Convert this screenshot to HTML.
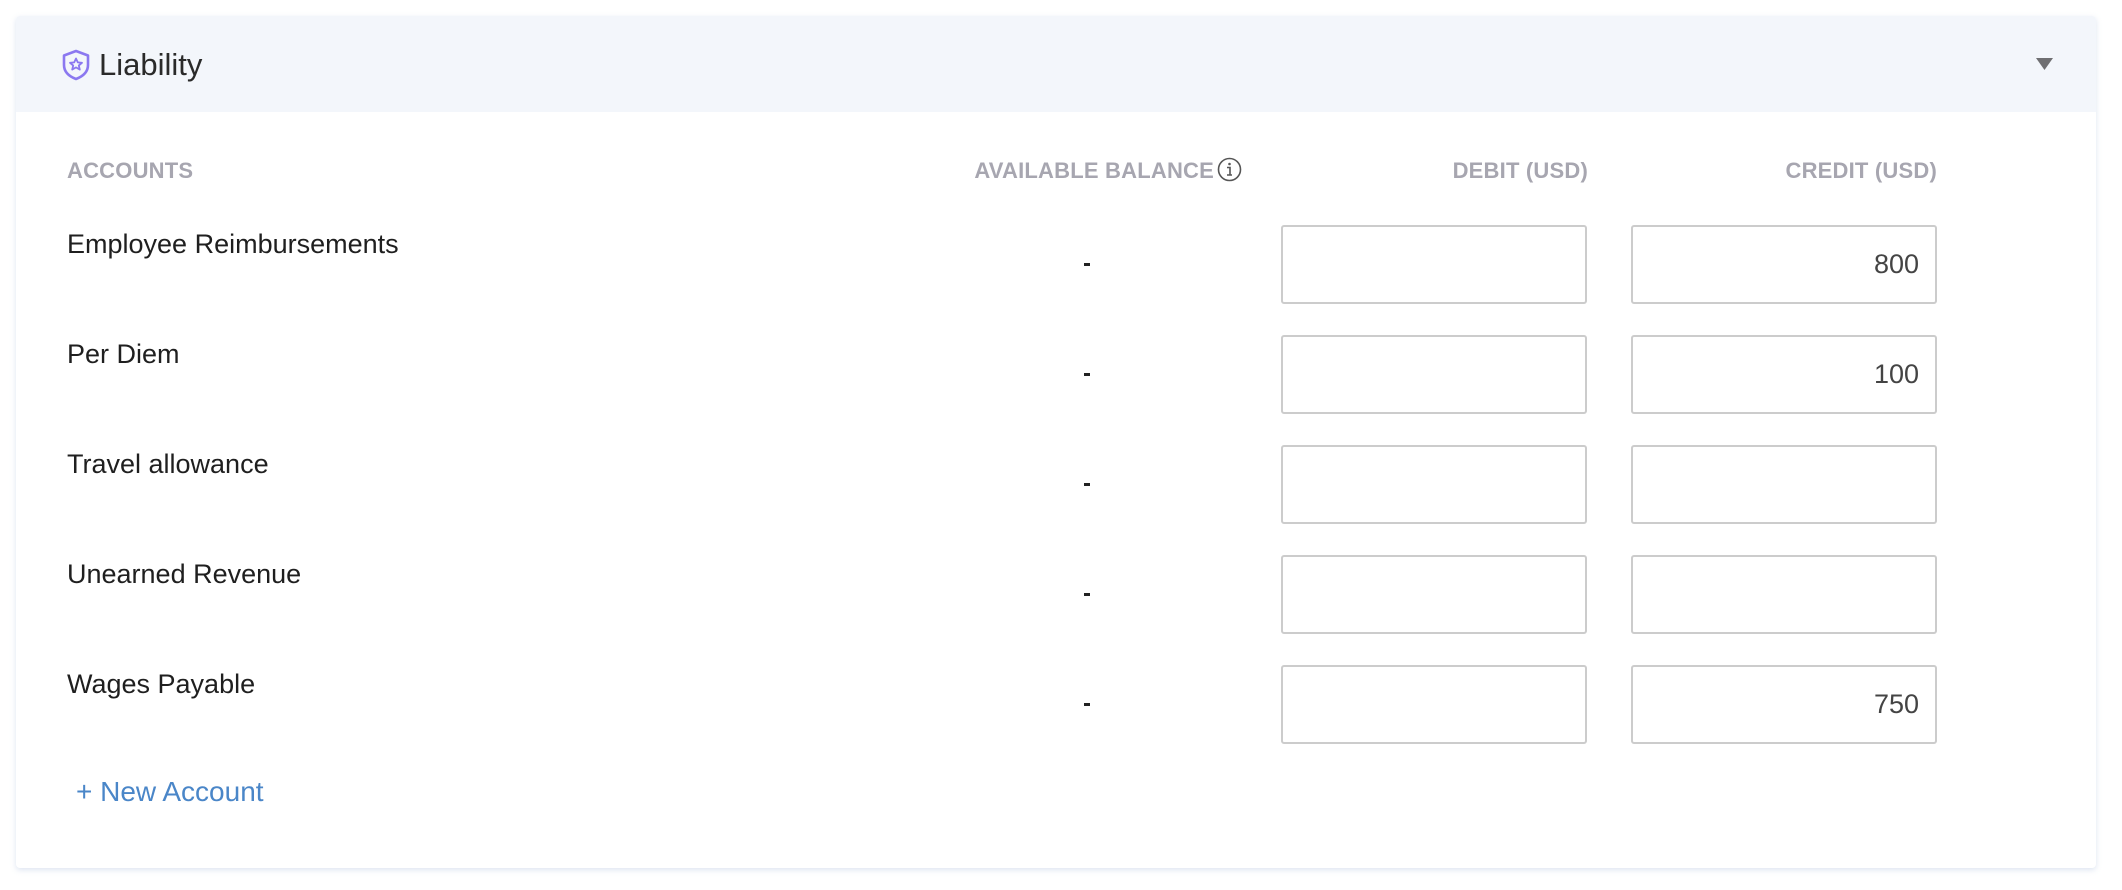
<!DOCTYPE html>
<html><head><meta charset="utf-8"><style>
body{margin:0;width:2122px;height:890px;background:#fff;font-family:"Liberation Sans",sans-serif;position:relative;overflow:hidden}
.card{position:absolute;left:16px;top:16px;width:2080px;height:852px;background:#fff;border-radius:4px;box-shadow:0 2px 6px rgba(180,195,225,.45)}
.hdr{position:absolute;left:0;top:0;right:0;height:96px;background:#f3f6fb;border-radius:4px 4px 0 0}
.abs{position:absolute;white-space:nowrap}
.th{font-size:22px;font-weight:bold;color:#a7a6b0;top:141px;line-height:28px;letter-spacing:0.2px}
.name{font-size:27px;color:#1f1f1f;left:51px;line-height:30px}
.dash{width:6px;height:3px;background:#222;left:1068px}
.inp{border:2px solid #cccccc;border-radius:3px;height:79px;width:306px;box-sizing:border-box;font-size:27px;color:#444;text-align:right;padding-right:16px;line-height:75px}
</style></head><body>
<div class="card">
 <div class="hdr"></div>
 <svg class="abs" style="left:45px;top:33px" width="30" height="32" viewBox="0 0 30 32"><path d="M15 2 L27 6.5 V16 C27 23 21.5 27.5 15 30 C8.5 27.5 3 23 3 16 V6.5 Z" fill="none" stroke="#8b78f0" stroke-width="2.6" stroke-linejoin="round"/><path d="M15 9.5 L16.8 13.4 L21 13.8 L17.8 16.5 L18.8 20.6 L15 18.4 L11.2 20.6 L12.2 16.5 L9 13.8 L13.2 13.4 Z" fill="none" stroke="#8b78f0" stroke-width="1.8" stroke-linejoin="round"/></svg>
 <div class="abs" style="left:83px;top:30px;font-size:31px;color:#2a2a2a;line-height:38px">Liability</div>
 <svg class="abs" style="left:2020px;top:42px" width="17" height="13"><path d="M0 0 H17 L8.5 12 Z" fill="#6f6f72"/></svg>
 <div class="abs th" style="left:51px">ACCOUNTS</div>
 <div class="abs th" style="right:882px">AVAILABLE BALANCE</div>
 <svg class="abs" style="left:1201px;top:141px" width="25" height="25" viewBox="0 0 25 25"><circle cx="12.5" cy="12.5" r="11" fill="none" stroke="#555" stroke-width="1.6"/><circle cx="12.5" cy="7" r="1.3" fill="#555"/><path d="M10 10.5 H13 V18 M10 18 H15" stroke="#555" stroke-width="1.6" fill="none"/></svg>
 <div class="abs th" style="right:508px">DEBIT (USD)</div>
 <div class="abs th" style="right:159px">CREDIT (USD)</div>

 <div class="abs name" style="top:213px">Employee Reimbursements</div>
 <div class="abs dash" style="top:247px"></div>
 <div class="abs inp" style="left:1265px;top:209px"></div>
 <div class="abs inp" style="left:1615px;top:209px">800</div>

 <div class="abs name" style="top:323px">Per Diem</div>
 <div class="abs dash" style="top:357px"></div>
 <div class="abs inp" style="left:1265px;top:319px"></div>
 <div class="abs inp" style="left:1615px;top:319px">100</div>

 <div class="abs name" style="top:433px">Travel allowance</div>
 <div class="abs dash" style="top:467px"></div>
 <div class="abs inp" style="left:1265px;top:429px"></div>
 <div class="abs inp" style="left:1615px;top:429px"></div>

 <div class="abs name" style="top:543px">Unearned Revenue</div>
 <div class="abs dash" style="top:577px"></div>
 <div class="abs inp" style="left:1265px;top:539px"></div>
 <div class="abs inp" style="left:1615px;top:539px"></div>

 <div class="abs name" style="top:653px">Wages Payable</div>
 <div class="abs dash" style="top:687px"></div>
 <div class="abs inp" style="left:1265px;top:649px"></div>
 <div class="abs inp" style="left:1615px;top:649px">750</div>

 <div class="abs" style="left:60px;top:760px;font-size:28px;color:#4a86c8;line-height:32px">+ New Account</div>
</div>
</body></html>
